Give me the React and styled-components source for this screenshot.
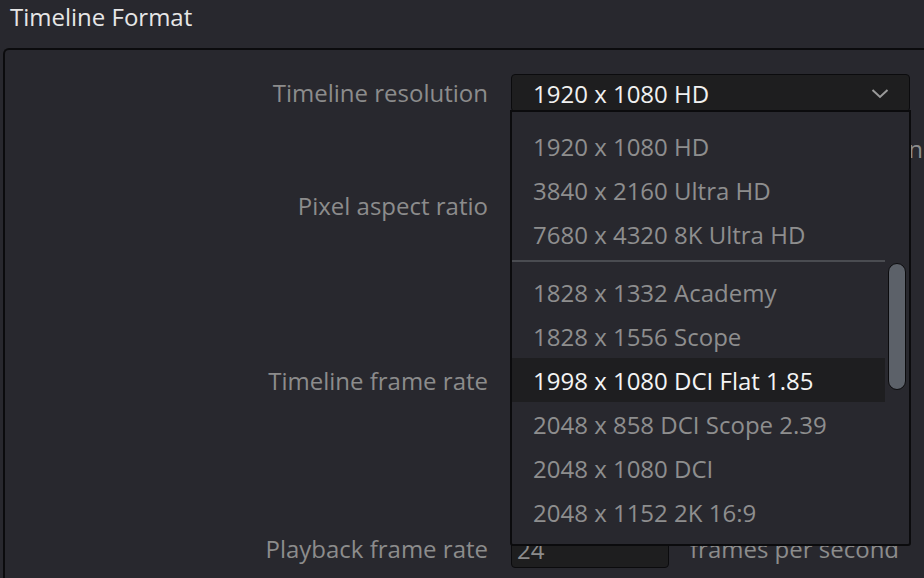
import styled, { createGlobalStyle } from "styled-components";

const GlobalStyle = createGlobalStyle`
  html, body {
    margin: 0;
    padding: 0;
    background: #28282e;
    overflow: hidden;
  }
  body {
    font-family: "Open Sans", "Noto Sans", sans-serif;
    -webkit-font-smoothing: antialiased;
  }
`;

const resolutions = [
  ["1920 x 1080 HD", "3840 x 2160 Ultra HD", "7680 x 4320 8K Ultra HD"],
  [
    "1828 x 1332 Academy",
    "1828 x 1556 Scope",
    "1998 x 1080 DCI Flat 1.85",
    "2048 x 858 DCI Scope 2.39",
    "2048 x 1080 DCI",
    "2048 x 1152 2K 16:9",
  ],
];

const Page = styled.div`
  width: 944px;
  height: 578px;
  display: flex;
  flex-direction: column;
`;

const Title = styled.h1`
  margin: 0;
  height: 48px;
  padding: 0 0 0 10px;
  font-size: 24px;
  font-weight: 400;
  line-height: 34px;
  color: #e6e6e6;
`;

const Panel = styled.section`
  flex: 1;
  margin-left: 3px;
  border: 2px solid #0b0b0d;
  border-right: none;
  border-bottom: none;
  border-radius: 6px 0 0 0;
  padding-top: 24px;
  display: flex;
  flex-direction: column;
`;

const FormRow = styled.div`
  display: grid;
  grid-template-columns: 483px 412px;
  column-gap: 23px;
  align-items: start;
  margin-top: ${(p) => p.$gap || 0}px;
`;

const Label = styled.div`
  text-align: right;
  font-size: 24px;
  line-height: 38px;
  color: #8c8c8c;
`;

const Control = styled.div`
  position: relative;
  display: flex;
  align-items: center;
  gap: 21px;
  justify-content: ${(p) => (p.$end ? "flex-end" : "flex-start")};
`;

const SelectBox = styled.div`
  box-sizing: border-box;
  width: 399px;
  height: 38px;
  background: #1e1e1f;
  border: 1.5px solid #0b0b0d;
  border-radius: 4px;
  padding: 0 20px 0 21px;
  display: flex;
  align-items: center;
  justify-content: space-between;
  font-size: 24px;
  color: #f0f0f0;
`;

const TextField = styled.div`
  box-sizing: border-box;
  width: 158px;
  height: 38px;
  background: #1e1e1f;
  border: 1.5px solid #0b0b0d;
  border-radius: 4px;
  padding-left: 5px;
  display: flex;
  align-items: center;
  font-size: 24px;
  color: #8c8c8c;
`;

const Note = styled.span`
  font-size: 24px;
  line-height: 38px;
  color: #8c8c8c;
  white-space: nowrap;
`;

const Menu = styled.div`
  position: absolute;
  top: 36px;
  left: -1px;
  z-index: 5;
  box-sizing: border-box;
  width: 401px;
  height: 436px;
  background: #28282e;
  border: 2px solid #0b0b0d;
  border-radius: 0 0 3px 3px;
  display: flex;
`;

const List = styled.div`
  width: 373px;
  padding-top: 12px;
  display: flex;
  flex-direction: column;
`;

const Item = styled.div`
  height: 44px;
  padding-left: 21px;
  display: flex;
  align-items: center;
  font-size: 24px;
  color: ${(p) => (p.$active ? "#f4f4f4" : "#8e8e8e")};
  background: ${(p) => (p.$active ? "#1e1e20" : "transparent")};
`;

const Divider = styled.div`
  height: 2px;
  margin: 4px 0 8px;
  background: #4a4c51;
`;

const Track = styled.div`
  flex: 1;
  padding: 151px 0 0 3px;
`;

const Thumb = styled.div`
  box-sizing: border-box;
  width: 18px;
  height: 127px;
  background: #5c6169;
  border: 1.5px solid #0b0b0d;
  border-radius: 9px;
`;

const Chevron = () => (
  <svg width="18" height="11" viewBox="0 0 18 11">
    <polyline
      points="1.5,2 9,9 16.5,2"
      fill="none"
      stroke="#9a9a9a"
      strokeWidth="2"
    />
  </svg>
);

const ResolutionMenu = ({ active }) => (
  <Menu>
    <List>
      {resolutions[0].map((r) => (
        <Item key={r}>{r}</Item>
      ))}
      <Divider />
      {resolutions[1].map((r) => (
        <Item key={r} $active={r === active}>
          {r}
        </Item>
      ))}
    </List>
    <Track>
      <Thumb />
    </Track>
  </Menu>
);

export default function App() {
  return (
    <>
      <GlobalStyle />
      <Page>
        <Title>Timeline Format</Title>
        <Panel>
          <FormRow>
            <Label>Timeline resolution</Label>
            <Control>
              <SelectBox>
                <span>1920 x 1080 HD</span>
                <Chevron />
              </SelectBox>
              <ResolutionMenu active="1998 x 1080 DCI Flat 1.85" />
            </Control>
          </FormRow>

          <FormRow $gap={18}>
            <div />
            <Control $end>
              <Note>resolution</Note>
            </Control>
          </FormRow>

          <FormRow $gap={19}>
            <Label>Pixel aspect ratio</Label>
          </FormRow>

          <FormRow $gap={137}>
            <Label>Timeline frame rate</Label>
          </FormRow>

          <FormRow $gap={130}>
            <Label>Playback frame rate</Label>
            <Control>
              <TextField>24</TextField>
              <Note>frames per second</Note>
            </Control>
          </FormRow>
        </Panel>
      </Page>
    </>
  );
}
